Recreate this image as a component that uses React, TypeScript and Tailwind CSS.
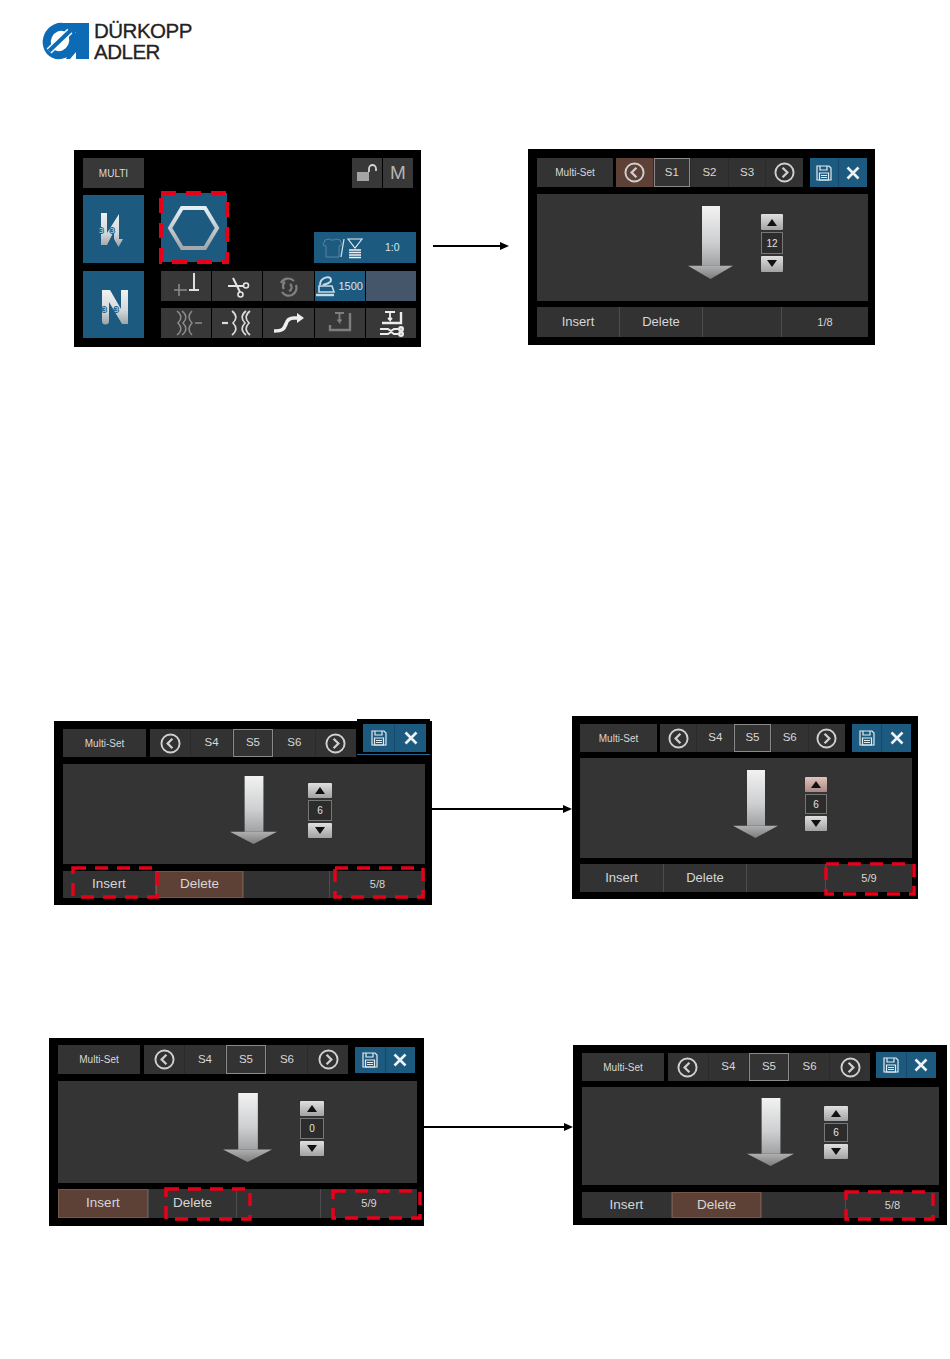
import type { ReactNode } from 'react';

/* ── Small drawings ── */

function Dash({ className, w = 3.5, dash = '13 9' }: { className: string; w?: number; dash?: string }) {
  return (
    <svg className={`absolute overflow-visible pointer-events-none ${className}`}>
      <rect width="100%" height="100%" fill="none" stroke="#e8001a" strokeWidth={w} strokeDasharray={dash} />
    </svg>
  );
}

function CircleChevron({ dir }: { dir: 'left' | 'right' }) {
  return (
    <svg viewBox="0 0 22 22" className="w-[21px] h-[21px]" fill="none" stroke="#d0d0d0" strokeWidth="2">
      <circle cx="11" cy="11" r="9.5" />
      <path strokeWidth="2.4" d={dir === 'left' ? 'M13 6l-5 5 5 5' : 'M9 6l5 5-5 5'} />
    </svg>
  );
}

function SaveIcon() {
  return (
    <svg viewBox="0 0 16 16" className="w-[16px] h-[16px]" fill="none" stroke="#e4ebef" strokeWidth="1.2">
      <path d="M1 1h12l2 2v12H1z" />
      <path d="M4 1v4h7V1" />
      <path d="M3.5 8h9v7h-9zM5 10.5h6M5 12.5h6" />
    </svg>
  );
}

function CloseIcon() {
  return (
    <svg viewBox="0 0 14 14" className="w-[14px] h-[14px]" fill="none" stroke="#eef2f5" strokeWidth="2.6">
      <path d="M1.5 1.5l11 11M12.5 1.5l-11 11" />
    </svg>
  );
}

function DownArrow({ className }: { className: string }) {
  return (
    <svg viewBox="0 0 45 72" preserveAspectRatio="none" className={className}>
      <defs>
        <linearGradient id="shaft" x1="0" y1="0" x2="0" y2="1">
          <stop offset="0" stopColor="#f2f2f2" />
          <stop offset="0.6" stopColor="#cdcfd1" />
          <stop offset="1" stopColor="#a0a2a4" />
        </linearGradient>
        <linearGradient id="head" x1="0" y1="0" x2="0" y2="1">
          <stop offset="0" stopColor="#b0b0b0" />
          <stop offset="1" stopColor="#7c7c7c" />
        </linearGradient>
      </defs>
      <rect x="14" y="0" width="18" height="59" fill="url(#shaft)" />
      <path d="M0 59H45L22.5 72Z" fill="url(#head)" />
    </svg>
  );
}

function Spinner({ value, className, hot }: { value: string; className: string; hot?: boolean }) {
  const btn = 'flex-1 flex items-center justify-center rounded-[1px] bg-gradient-to-b';
  return (
    <div className={`flex flex-col gap-[2px] ${className}`}>
      <div className={`${btn} ${hot ? 'from-[#e2c4bc] to-[#a88a82]' : 'from-[#e0e0e0] to-[#a2a2a2]'}`}>
        <svg viewBox="0 0 10 7" className="w-[10px] h-[7px]"><path d="M5 0l5 7H0z" fill="#111" /></svg>
      </div>
      <div className="flex-[1.2] flex items-center justify-center border border-[#777] bg-[#2c2c2c] text-[10px] text-[#e2e2e2]">
        {value}
      </div>
      <div className={`${btn} from-[#e0e0e0] to-[#a2a2a2]`}>
        <svg viewBox="0 0 10 7" className="w-[10px] h-[7px]"><path d="M5 7L0 0h10z" fill="#111" /></svg>
      </div>
    </div>
  );
}

/* ── Multi-Set panel, the five copies differ by a few pixels ── */

type PanelProps = {
  labels: string[];
  selected: number;
  backActive?: boolean;
  value: string;
  count: string;
  hotDelete?: boolean;
  hotInsert?: boolean;
  hotUp?: boolean;
  panel: string;
  top: string;
  multi: string;
  nav: string;
  save: string;
  main: string;
  arrow: string;
  spinner: string;
  bottom: string;
  text: string;
  children?: ReactNode;
};

function MultiSet(p: PanelProps) {
  const bottomCell = 'flex items-center justify-center text-[#d6d6d6]';
  const idle = 'bg-[#323232]';
  const hot = 'bg-[#5e4136] border border-[#75574a]';
  return (
    <div className={`relative isolate flex flex-col shrink-0 bg-black font-['Liberation_Sans',sans-serif] ${p.panel}`}>
      {p.children}
      <div className={`flex ${p.top}`}>
        <div className={`flex items-center justify-center bg-[#333] text-[10px] text-[#d8d8d8] ${p.multi}`}>Multi-Set</div>
        <div className={`grid grid-cols-5 gap-px bg-[#2a2a2a] ${p.nav}`}>
          <div className={`flex items-center justify-center ${p.backActive ? 'bg-[#5e4136]' : 'bg-[#323232]'}`}>
            <CircleChevron dir="left" />
          </div>
          {p.labels.map((label, i) => (
            <div
              key={label}
              className={`flex items-center justify-center text-[11.5px] text-[#d8d8d8] ${i === p.selected ? 'border border-[#8a8a8a] bg-[#333]' : 'bg-[#323232]'}`}
            >
              {label}
            </div>
          ))}
          <div className="flex items-center justify-center bg-[#323232]">
            <CircleChevron dir="right" />
          </div>
        </div>
        <div className={`grid grid-cols-2 gap-px bg-[#17486a] ${p.save}`}>
          <div className="flex items-center justify-center bg-[#1d5a80]"><SaveIcon /></div>
          <div className="flex items-center justify-center bg-[#1d5a80]"><CloseIcon /></div>
        </div>
      </div>
      <div className={`flex items-start bg-[#343434] ${p.main}`}>
        <DownArrow className={`shrink-0 ${p.arrow}`} />
        <Spinner value={p.value} className={p.spinner} hot={p.hotUp} />
      </div>
      <div className={`grid gap-px bg-[#4c4c4c] ${p.bottom} ${p.text}`}>
        <div className={`${bottomCell} ${p.hotInsert ? hot : idle}`}>Insert</div>
        <div className={`${bottomCell} ${p.hotDelete ? hot : idle}`}>Delete</div>
        <div className={`${bottomCell} ${idle}`} />
        <div className={`${bottomCell} ${idle} text-[11px]`}>{p.count}</div>
      </div>
    </div>
  );
}

/* ── Main screen panel ── */

function Cell({ className = 'bg-[#383838]', children }: { className?: string; children?: ReactNode }) {
  return <div className={`flex items-center justify-center h-[30px] ${className}`}>{children}</div>;
}

function Icon({ children, stroke = '#8c8c8c', w = 1.5 }: { children: ReactNode; stroke?: string; w?: number }) {
  return (
    <svg viewBox="0 0 49 30" className="w-[49px] h-[30px]" fill="none" stroke={stroke} strokeWidth={w}>
      {children}
    </svg>
  );
}

function BracketIcon({ stroke, tools }: { stroke: string; tools?: boolean }) {
  return (
    <Icon stroke={stroke} w={2.4}>
      <path d={tools ? 'M16 15h19V4' : 'M15 17v5h20V5'} />
      <path strokeWidth="1.8" d={tools ? 'M19 4h10M24 5v7l-2-2M24 12l2-2' : 'M20 5h9M24.5 6v8l-2-2.5M24.5 14l2-2.5'} />
      {tools && (
        <>
          <path strokeWidth="2" d="M14 21h8l3 2 3-2h4M14 26h8l3-2 3 2h4" />
          <circle cx="35" cy="21" r="1.8" />
          <circle cx="35" cy="26" r="1.8" />
        </>
      )}
    </Icon>
  );
}

function TileDigit({ x, y }: { x: number; y: number }) {
  return (
    <text x={x} y={y} fontSize="8" fill="#c4e8fb" stroke="#1d5a80" strokeWidth="1.8" paintOrder="stroke" fontFamily="Liberation Sans">
      3
    </text>
  );
}

function MainScreen() {
  return (
    <div className="flex shrink-0 w-[347px] h-[197px] mt-px pl-[9px] pt-[8px] bg-black font-['Liberation_Sans',sans-serif]">
      <div className="flex flex-col w-[61px]">
        <div className="flex items-center justify-center h-[30px] bg-[#383838] text-[10px] text-[#d8d8d8]">MULTI</div>
        <div className="mt-[7px] h-[68px] bg-[#1d5a80]">
          <svg viewBox="0 0 61 68" className="w-[61px] h-[68px]">
            <defs>
              <linearGradient id="nGrad" x1="0" y1="0" x2="0" y2="1">
                <stop offset="0" stopColor="#f0f2f3" />
                <stop offset="0.6" stopColor="#d2d7da" />
                <stop offset="1" stopColor="#9aa3a9" />
              </linearGradient>
            </defs>
            <path d="M18 18H24V38L36 19V44H40L35.5 52 31 44V36L24 50H18Z" fill="url(#nGrad)" />
            <TileDigit x={16} y={38} />
            <TileDigit x={27} y={38} />
          </svg>
        </div>
        <div className="mt-[8px] h-[67px] bg-[#1d5a80]">
          <svg viewBox="0 0 61 67" className="w-[61px] h-[67px]">
            <path d="M19 19H27L38 38V19H45V53H39L26 31V50A3.5 3.5 0 0 1 19 50Z" fill="url(#nGrad)" />
            <TileDigit x={19} y={41} />
            <TileDigit x={31} y={41} />
          </svg>
        </div>
      </div>

      <div className="flex flex-col w-[255px] ml-[17px]">
        <div className="flex h-[105px]">
          <div className="relative w-[66px] h-[69px] mt-[35px] bg-[#1d5a80]">
            <svg viewBox="0 0 66 69" className="w-[66px] h-[69px]" fill="none">
              <defs>
                <linearGradient id="hexGrad" x1="0" y1="0" x2="0" y2="1">
                  <stop offset="0" stopColor="#e4eef3" />
                  <stop offset="1" stopColor="#a2a8ac" />
                </linearGradient>
              </defs>
              <path d="M9 35L21 15H44L56 35 44 55H21Z" stroke="url(#hexGrad)" strokeWidth="4" />
            </svg>
            <Dash className="left-0 top-0 w-[66px] h-[69px]" w={4} dash="15 10" />
          </div>
          <div className="flex flex-col flex-1 items-end">
            <div className="flex gap-px h-[30px] mr-[3px]">
              <div className="flex items-center justify-center w-[30px] bg-[#383838]">
                <svg viewBox="0 0 22 18" className="w-[22px] h-[18px]" fill="none">
                  <rect x="1" y="8" width="12" height="9" fill="#a4a4a4" />
                  <path d="M13 8V4.5a3.5 3.5 0 0 1 7 0V7" stroke="#d4d4d4" strokeWidth="1.8" />
                </svg>
              </div>
              <div className="flex items-center justify-center w-[30px] bg-[#383838] text-[19px] text-[#b4b4b4]">M</div>
            </div>
            <div className="flex items-center w-[102px] h-[31px] mt-auto pl-[7px] bg-[#1d5a80]">
              <svg viewBox="0 0 44 22" className="w-[44px] h-[22px]" fill="none">
                <path d="M4 3l4-1 2 1h3l2-1 4 1 2 5-3 1v11H5V9L2 8z" stroke="#5f8198" strokeWidth="1" />
                <path d="M19 20l3-18" stroke="#c9dbe6" strokeWidth="1.3" transform="translate(1 0)" />
                <path d="M27 2h14l-7 9z" stroke="#e8eef2" strokeWidth="1.1" />
                <path d="M28 13h12M28 15.500h12M28 18h12M28 20.500h12" stroke="#eef2f5" strokeWidth="1.3" />
              </svg>
              <span className="ml-[20px] text-[10.5px] text-[#dbe6ec]">1:0</span>
            </div>
          </div>
        </div>

        <div className="grid grid-cols-5 gap-x-px gap-y-[7px] mt-[8px]">
          <Cell>
            <Icon>
              <path d="M12 19h13M17 13v12" />
              <path stroke="#dedede" strokeWidth="2" d="M32 2v16M27 19h10" />
            </Icon>
          </Cell>
          <Cell>
            <Icon stroke="#e4e4e4" w={1.6}>
              <path strokeWidth="2" d="M15 15h15M20 7l7 14" />
              <circle cx="33" cy="14.500" r="2.500" />
              <circle cx="27.500" cy="23.500" r="2.500" />
            </Icon>
          </Cell>
          <Cell>
            <Icon stroke="#808080" w={2.2}>
              <path d="M17 12a8 8 0 0 1 13-2M32 14a8 8 0 0 1-4 10 8 8 0 0 1-10-3M20 18a5 5 0 0 1 1-7M26 13a4 4 0 0 1-1 7" />
            </Icon>
          </Cell>
          <Cell className="bg-[#1d5a80] gap-[2px] text-[11px] text-[#dbe6ec]">
            <svg viewBox="0 0 20 24" className="w-[20px] h-[24px]" fill="none" stroke="#c6dbe8" strokeWidth="2">
              <path d="M4 11C4 3 15 1 15 6 15 10 8 10 7 11" />
              <path strokeWidth="1.6" d="M3 12H16L18 18H3Z" />
              <path strokeWidth="2.4" d="M0 21H18" />
            </svg>
            1500
          </Cell>
          <Cell className="bg-[#45566a]" />
          <Cell>
            <Icon stroke="#8c8c8c" w={1.5}>
              <path d="M15 3c5 4 5 8 1 12 4 4 4 8-1 12M20 3c5 4 5 8 1 12 4 4 4 8-1 12M30 3c-4 4-4 8 0 12-4 4-4 8 0 12" />
              <path d="M33 15h7" />
            </Icon>
          </Cell>
          <Cell>
            <Icon stroke="#dadada" w={1.7}>
              <path d="M9 15h6" strokeWidth="2.2" />
              <path d="M19 3c5 4 5 8 1 12 4 4 4 8-1 12M33 3c-5 4-5 8-1 12-4 4-4 8 1 12M37 3c-5 4-5 8-1 12-4 4-4 8 1 12" />
            </Icon>
          </Cell>
          <Cell>
            <Icon stroke="#eeeeee" w={3.6}>
              <path d="M10 23c9 0 10-2 12-7 1-4 3-6 8-6h4" />
              <path fill="#eeeeee" stroke="none" d="M33 5l7 5-7 5z" />
            </Icon>
          </Cell>
          <Cell><BracketIcon stroke="#7e7e7e" /></Cell>
          <Cell><BracketIcon stroke="#ececec" tools /></Cell>
        </div>
      </div>
    </div>
  );
}

function Connector({ className }: { className: string }) {
  return (
    <div className={`flex items-center shrink-0 h-[8px] ${className}`}>
      <div className="flex-1 h-[2px] bg-black" />
      <svg viewBox="0 0 9 8" className="w-[9px] h-[8px] shrink-0"><path d="M0 0l9 4-9 4z" fill="#000" /></svg>
    </div>
  );
}

export default function App() {
  return (
    <div className="w-[950px] h-[1359px] overflow-hidden bg-white">
      {/* Logo */}
      <div className="flex pl-[40px] pt-[18px] h-[63px]">
        <svg viewBox="0 0 55 45" className="w-[55px] h-[45px]">
          <ellipse cx="20" cy="23" rx="13" ry="14.500" transform="rotate(25 20 23)" fill="none" stroke="#0d6ab5" strokeWidth="8" />
          <path d="M9 33L30 13" stroke="#ffffff" strokeWidth="7" />
          <path d="M9 33L30 13" stroke="#0d6ab5" strokeWidth="4" />
          <path d="M23 5H49V41H36V14H30Z M36 18V34L30 41H26Z" fill="#0d6ab5" />
        </svg>
        <div className="-ml-[1px] mt-[2px] font-['Liberation_Sans',sans-serif] text-[20.500px] leading-[21px] text-[#222] tracking-[-0.5px] [-webkit-text-stroke:0.3px_#222]">
          <div>DÜRKOPP</div>
          <div>ADLER</div>
        </div>
      </div>

      {/* Row 1 */}
      <div className="flex items-start mt-[86px] pl-[74px]">
        <MainScreen />
        <Connector className="w-[76px] ml-[12px] mr-[19px] mt-[93px]" />
        <MultiSet
          labels={['S1', 'S2', 'S3']}
          selected={0}
          backActive
          value="12"
          count="1/8"
          panel="w-[347px] h-[196px] pl-[9px] pt-[9px]"
          top="h-[29px]"
          multi="w-[76px]"
          nav="w-[187px] ml-[3px]"
          save="w-[57px] ml-[7px]"
          main="w-[331px] h-[107px] mt-[7px] pl-[151px] pt-[12px]"
          arrow="w-[45px] h-[73px]"
          spinner="w-[22px] h-[58px] ml-[28px] mt-[8px]"
          bottom="w-[331px] h-[30px] mt-[6px] grid-cols-[82px_82px_78px_1fr]"
          text="text-[13px]"
        />
      </div>

      {/* Row 2 */}
      <div className="flex items-start mt-[369px] pl-[54px]">
        <MultiSet
          labels={['S4', 'S5', 'S6']}
          selected={1}
          value="6"
          count="5/8"
          hotDelete
          panel="w-[378px] h-[184px] mt-[5px] pl-[9px] pt-[8px]"
          top="h-[28px]"
          multi="w-[83px]"
          nav="w-[206px] ml-[4px]"
          save="w-[63px] h-[28px] ml-[7px] -mt-[5px]"
          main="w-[362px] h-[100px] mt-[7px] pl-[167px] pt-[12px]"
          arrow="w-[47px] h-[68px]"
          spinner="w-[24px] h-[55px] ml-[31px] mt-[7px]"
          bottom="w-[362px] h-[27px] mt-[7px] grid-cols-[92px_87px_85px_1fr]"
          text="text-[13.500px]"
        >
          <div className="absolute -z-10 left-[303px] -top-[2px] w-[73px] h-[36px] bg-black border-b border-[#2a6a92]" />
          <Dash className="left-[19px] top-[147px] w-[84px] h-[29px] z-10" />
          <Dash className="left-[281px] top-[147px] w-[88px] h-[29px] z-10" />
        </MultiSet>
        <Connector className="w-[140px] mt-[89px]" />
        <MultiSet
          labels={['S4', 'S5', 'S6']}
          selected={1}
          value="6"
          count="5/9"
          hotUp
          panel="w-[346px] h-[183px] pl-[8px] pt-[8px]"
          top="h-[28px]"
          multi="w-[77px]"
          nav="w-[185px] ml-[3px]"
          save="w-[59px] ml-[7px]"
          main="w-[332px] h-[100px] mt-[6px] pl-[153px] pt-[12px]"
          arrow="w-[45px] h-[68px]"
          spinner="w-[22px] h-[54px] ml-[27px] mt-[7px]"
          bottom="w-[332px] h-[28px] mt-[6px] grid-cols-[83px_82px_78px_1fr]"
          text="text-[13px]"
        >
          <Dash className="left-[254px] top-[148px] w-[88px] h-[30px] z-10" />
        </MultiSet>
      </div>

      {/* Row 3 */}
      <div className="flex items-start mt-[133px] pl-[49px]">
        <MultiSet
          labels={['S4', 'S5', 'S6']}
          selected={1}
          value="0"
          count="5/9"
          hotInsert
          panel="w-[375px] h-[188px] pl-[9px] pt-[7px]"
          top="h-[29px]"
          multi="w-[82px]"
          nav="w-[204px] ml-[4px]"
          save="w-[60px] h-[26px] ml-[7px] mt-[2px]"
          main="w-[359px] h-[102px] mt-[7px] pl-[165px] pt-[12px]"
          arrow="w-[49px] h-[69px]"
          spinner="w-[24px] h-[55px] ml-[28px] mt-[8px]"
          bottom="w-[359px] h-[29px] mt-[6px] grid-cols-[90px_87px_83px_1fr]"
          text="text-[13.500px]"
        >
          <Dash className="left-[117px] top-[151px] w-[84px] h-[30px] z-10" />
          <Dash className="left-[284px] top-[153px] w-[87px] h-[27px] z-10" />
        </MultiSet>
        <Connector className="w-[149px] mt-[85px]" />
        <MultiSet
          labels={['S4', 'S5', 'S6']}
          selected={1}
          value="6"
          count="5/8"
          hotDelete
          panel="w-[374px] h-[180px] mt-[7px] pl-[9px] pt-[8px]"
          top="h-[28px]"
          multi="w-[82px]"
          nav="w-[202px] ml-[4px]"
          save="w-[60px] h-[26px] ml-[6px] -mt-[1px]"
          main="w-[357px] h-[98px] mt-[6px] pl-[165px] pt-[11px]"
          arrow="w-[47px] h-[68px]"
          spinner="w-[24px] h-[53px] ml-[30px] mt-[8px]"
          bottom="w-[357px] h-[26px] mt-[7px] grid-cols-[89px_89px_83px_1fr]"
          text="text-[13.500px]"
        >
          <Dash className="left-[273px] top-[147px] w-[87px] h-[27px] z-10" />
        </MultiSet>
      </div>
    </div>
  );
}
